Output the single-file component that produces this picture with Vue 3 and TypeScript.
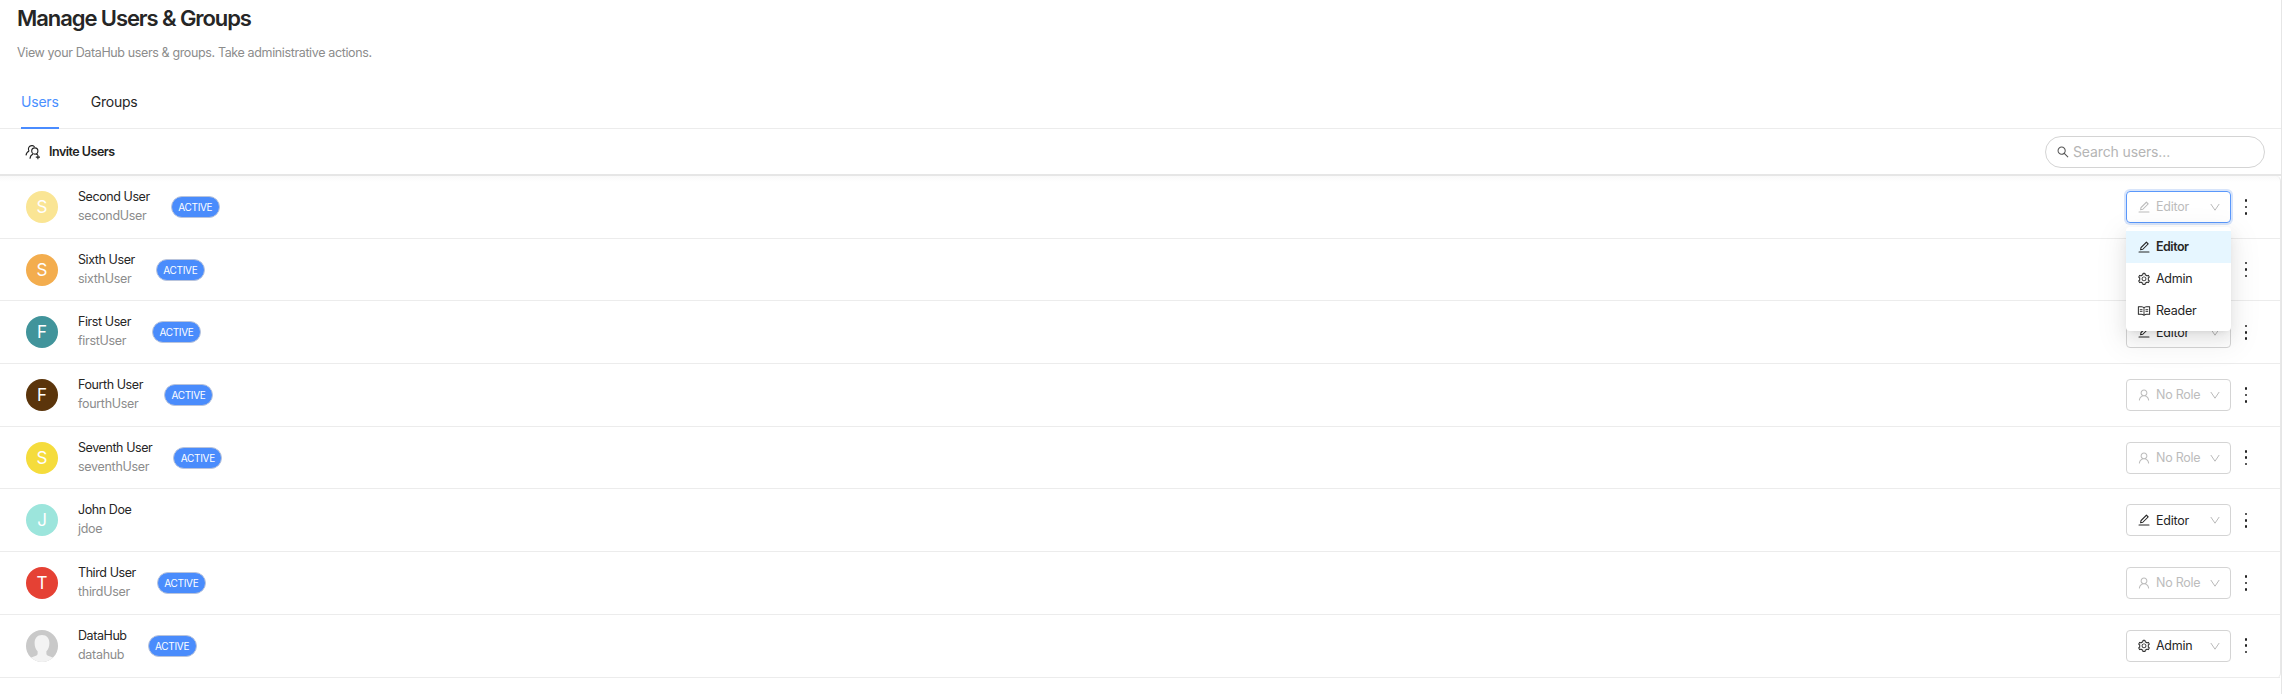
<script setup lang="ts">
type IconName = 'edit' | 'setting' | 'read' | 'user'

interface Role {
  label: string
  icon: IconName
}

interface User {
  name: string
  id: string
  tone: string
  initial?: string
  active: boolean
  role?: Role
  state?: 'muted' | 'open'
}

const editor: Role = { label: 'Editor', icon: 'edit' }
const admin: Role = { label: 'Admin', icon: 'setting' }
const reader: Role = { label: 'Reader', icon: 'read' }
const noRole: Role = { label: 'No Role', icon: 'user' }

const options: Role[] = [editor, admin, reader]

const users: User[] = [
  { name: 'Second User', id: 'secondUser', tone: 'cream', initial: 'S', active: true, role: editor, state: 'open' },
  { name: 'Sixth User', id: 'sixthUser', tone: 'orange', initial: 'S', active: true },
  { name: 'First User', id: 'firstUser', tone: 'teal', initial: 'F', active: true, role: editor },
  { name: 'Fourth User', id: 'fourthUser', tone: 'brown', initial: 'F', active: true, role: noRole, state: 'muted' },
  { name: 'Seventh User', id: 'seventhUser', tone: 'yellow', initial: 'S', active: true, role: noRole, state: 'muted' },
  { name: 'John Doe', id: 'jdoe', tone: 'mint', initial: 'J', active: false, role: editor },
  { name: 'Third User', id: 'thirdUser', tone: 'red', initial: 'T', active: true, role: noRole, state: 'muted' },
  { name: 'DataHub', id: 'datahub', tone: 'photo', active: true, role: admin },
]

const icons: Record<IconName, string> = {
  edit: 'M257.7 752c2 0 4-.2 6-.5L431.900 722c2-.4 3.900-1.300 5.300-2.800l423.900-423.900a9.960 9.960 0 0 0 0-14.100L694.900 114.900c-1.900-1.900-4.400-2.900-7.100-2.900s-5.200 1-7.100 2.900L256.800 538.800c-1.500 1.500-2.400 3.300-2.800 5.300l-29.500 168.200a33.500 33.500 0 0 0 9.400 29.800c6.600 6.400 14.900 9.900 23.800 9.900zm67.400-174.400L687.800 215l73.300 73.300-362.700 362.600-88.900 15.700 15.600-89zM880 836H144c-17.700 0-32 14.300-32 32v36c0 4.400 3.600 8 8 8h784c4.400 0 8-3.600 8-8v-36c0-17.700-14.300-32-32-32z',
  setting: 'M924.8 625.700l-65.500-56c3.100-19 4.700-38.400 4.700-57.800s-1.600-38.800-4.700-57.800l65.500-56a32.030 32.030 0 0 0 9.300-35.200l-.9-2.600a443.740 443.740 0 0 0-79.700-137.900l-1.800-2.100a32.120 32.120 0 0 0-35.100-9.500l-81.300 28.900c-30-24.600-63.500-44-99.700-57.600l-15.700-85a32.050 32.050 0 0 0-25.800-25.700l-2.700-.5c-52.100-9.400-106.900-9.400-159 0l-2.700.5a32.050 32.050 0 0 0-25.800 25.700l-15.800 85.400a351.860 351.860 0 0 0-99 57.400l-81.900-29.100a32 32 0 0 0-35.100 9.500l-1.800 2.100a446.020 446.020 0 0 0-79.700 137.900l-.9 2.600c-4.500 12.500-.8 26.500 9.300 35.200l66.300 56.600c-3.100 18.800-4.600 38-4.600 57.100 0 19.200 1.500 38.400 4.600 57.100L99 625.500a32.030 32.030 0 0 0-9.300 35.200l.9 2.600c18.100 50.400 44.900 96.900 79.700 137.900l1.800 2.100a32.120 32.120 0 0 0 35.100 9.500l81.900-29.100c29.800 24.500 63.100 43.900 99 57.400l15.800 85.400a32.050 32.050 0 0 0 25.800 25.700l2.700.5a449.400 449.400 0 0 0 159 0l2.700-.5a32.050 32.050 0 0 0 25.800-25.700l15.700-85a350 350 0 0 0 99.700-57.600l81.300 28.900a32 32 0 0 0 35.100-9.500l1.800-2.100c34.800-41.100 61.600-87.500 79.700-137.900l.9-2.600c4.500-12.300.8-26.300-9.300-35zM788.300 465.900c2.500 15.100 3.800 30.600 3.800 46.100s-1.300 31-3.800 46.100l-6.600 40.100 74.700 63.900a370.030 370.030 0 0 1-42.600 73.600L721 702.800l-31.400 25.800c-23.900 19.600-50.500 35-79.300 45.800l-38.100 14.300-17.900 97a377.500 377.500 0 0 1-85 0l-17.900-97.200-37.800-14.500c-28.500-10.800-55-26.200-78.700-45.700l-31.400-25.900-93.400 33.200c-17-22.900-31.200-47.600-42.600-73.600l75.500-64.500-6.500-40c-2.400-14.900-3.700-30.300-3.700-45.500 0-15.300 1.200-30.600 3.700-45.500l6.500-40-75.500-64.500c11.300-26.100 25.600-50.700 42.600-73.600l93.400 33.200 31.400-25.900c23.700-19.500 50.200-34.900 78.700-45.700l37.900-14.300 17.900-97.200c28.100-3.200 56.800-3.200 85 0l17.900 97 38.100 14.300c28.700 10.800 55.400 26.200 79.300 45.800l31.400 25.800 92.800-32.900c17 22.900 31.200 47.600 42.600 73.600L781.800 426l6.500 39.900zM512 326c-97.200 0-176 78.800-176 176s78.800 176 176 176 176-78.800 176-176-78.800-176-176-176zm79.200 255.200A111.600 111.600 0 0 1 512 614c-29.900 0-58-11.700-79.200-32.800A111.600 111.600 0 0 1 400 502c0-29.900 11.700-58 32.800-79.200C454 401.600 482.100 390 512 390c29.900 0 58 11.600 79.200 32.800A111.600 111.600 0 0 1 624 502c0 29.900-11.700 58-32.800 79.200z',
  read: 'M928 161H699.200c-49.100 0-97.100 14.100-138.400 40.700L512 233l-48.800-31.300A255.200 255.200 0 0 0 324.800 161H96c-17.700 0-32 14.300-32 32v568c0 17.700 14.300 32 32 32h228.800c49.100 0 97.100 14.100 138.400 40.700l44.400 28.600c1.300.8 2.800 1.300 4.300 1.300s3-.4 4.300-1.300l44.400-28.600C602 807.100 650.100 793 699.200 793H928c17.700 0 32-14.300 32-32V193c0-17.700-14.300-32-32-32zM324.800 721H136V233h188.800c35.400 0 69.800 10.100 99.500 29.200l48.800 31.300 6.900 4.500v462c-47.600-25.600-100.800-39-155.200-39zm563.200 0H699.200c-54.400 0-107.600 13.400-155.200 39V298l6.900-4.500 48.800-31.300c29.700-19.100 64.100-29.200 99.500-29.200H888v488zM396.900 361H211.100c-3.900 0-7.100 3.400-7.100 7.500v45c0 4.100 3.200 7.500 7.100 7.500h185.700c3.900 0 7.100-3.400 7.100-7.500v-45c.1-4.100-3.100-7.500-7-7.500zm223.100 7.500v45c0 4.100 3.200 7.500 7.100 7.500h185.700c3.900 0 7.100-3.400 7.100-7.500v-45c0-4.100-3.200-7.500-7.100-7.500H627.100c-3.900 0-7.100 3.400-7.100 7.500zM396.900 501H211.100c-3.900 0-7.100 3.400-7.100 7.500v45c0 4.100 3.200 7.500 7.100 7.500h185.700c3.900 0 7.100-3.400 7.100-7.500v-45c.1-4.100-3.100-7.500-7-7.500zm416 0H627.100c-3.900 0-7.100 3.400-7.100 7.500v45c0 4.100 3.200 7.500 7.100 7.500h185.700c3.900 0 7.100-3.400 7.100-7.500v-45c.1-4.100-3.100-7.500-7-7.500z',
  user: 'M858.500 763.600a374 374 0 0 0-80.600-119.500 375.630 375.630 0 0 0-119.500-80.600c-.4-.2-.8-.3-1.200-.5C719.500 518 760 444.700 760 362c0-137-111-248-248-248S264 225 264 362c0 82.700 40.500 156 102.800 201.100-.4.2-.8.3-1.200.5-44.800 18.900-85 46-119.500 80.600a375.630 375.630 0 0 0-80.600 119.500A371.700 371.700 0 0 0 136 901.800a8 8 0 0 0 8 8.200h60c4.400 0 7.900-3.500 8-7.800 2-77.200 33-149.500 87.800-204.300 56.700-56.700 132-87.900 212.200-87.900s155.500 31.200 212.200 87.900C779 752.700 810 825 812 902.200c.1 4.400 3.600 7.800 8 7.800h60a8 8 0 0 0 8-8.200c-1-47.800-10.900-94.300-29.500-138.200zM512 534c-45.900 0-89.100-17.900-121.600-50.400S340 407.900 340 362c0-45.900 17.900-89.100 50.400-121.600S466.100 190 512 190s89.100 17.900 121.600 50.400S684 316.100 684 362c0 45.900-17.900 89.100-50.400 121.600S557.900 534 512 534z',
}
</script>

<template>
  <main class="page">
    <header class="head">
      <h1>Manage Users &amp; Groups</h1>
      <p>View your DataHub users &amp; groups. Take administrative actions.</p>
    </header>

    <nav class="tabs">
      <a class="tab current">Users</a>
      <a class="tab">Groups</a>
    </nav>

    <div class="toolbar">
      <button class="invite" type="button">
        <svg viewBox="0 0 16 16" class="invite-icon">
          <path d="M4.100 7.100A3.300 3.300 0 1 1 9.600 3M4.200 7C2.300 7.900 1.200 9.400 1 11.400M5 14.800c.1-2.200 1.100-3.900 3-4.800M11.200 10.100c.7.200 1.200.4 1.600.8" />
          <circle cx="9.800" cy="7" r="3.100" />
          <path d="M12.900 11v4.200M10.800 13.100h4.200" />
        </svg>
        <span>Invite Users</span>
      </button>
      <div class="search">
        <svg viewBox="0 0 1024 1024" class="search-icon"><path d="M909.600 854.500L649.900 594.800C690.200 542.700 712 479 712 412c0-80.200-31.300-155.400-87.900-212.100-56.600-56.700-132-87.900-212.100-87.900s-155.500 31.300-212.100 87.900C143.200 256.500 112 331.800 112 412c0 80.100 31.300 155.500 87.900 212.100C256.500 680.800 331.800 712 412 712c67 0 130.600-21.800 182.700-62l259.700 259.600a8.200 8.200 0 0 0 11.600 0l43.600-43.500a8.200 8.200 0 0 0 0-11.600zM570.400 570.400C528 612.700 471.800 636 412 636s-116-23.300-158.400-65.600C211.300 528 188 471.800 188 412s23.300-116.100 65.600-158.400C296 211.300 352.200 188 412 188s116.100 23.200 158.400 65.600S636 352.200 636 412s-23.300 116.100-65.600 158.400z" /></svg>
        <span>Search users...</span>
      </div>
    </div>

    <ul class="list">
      <li v-for="user in users" :key="user.id" class="row">
        <div class="avatar" :class="user.tone">
          <span v-if="user.initial">{{ user.initial }}</span>
          <svg v-else viewBox="0 0 32 32">
            <path d="M16 5c4.700 0 7.400 3.300 7.400 7.900 0 3.600-1.100 6.500-3 8.400v2.400c0 1.300 1 1.800 3 2.500 2.800 1 5.300 1.600 6.600 3.800v2H2v-2c1.300-2.200 3.800-2.800 6.600-3.800 2-.7 3-1.200 3-2.500v-2.400c-1.900-1.900-3-4.800-3-8.400C8.600 8.300 11.300 5 16 5z" />
          </svg>
        </div>
        <div class="who">
          <span class="name">{{ user.name }}</span>
          <span class="id">{{ user.id }}</span>
        </div>
        <span v-if="user.active" class="badge">ACTIVE</span>

        <div class="actions">
          <div class="select" :class="user.state">
            <template v-if="user.role">
              <svg viewBox="0 0 1024 1024" class="icon"><path :d="icons[user.role.icon]" /></svg>
              <span class="label">{{ user.role.label }}</span>
            </template>
            <svg viewBox="0 0 12 12" class="chevron"><path d="M1.800 3L6 9.200 10.200 3" /></svg>
            <div v-if="user.state === 'open'" class="menu">
              <div v-for="(option, i) in options" :key="option.label" class="option" :class="{ chosen: i === 0 }">
                <svg viewBox="0 0 1024 1024" class="icon"><path :d="icons[option.icon]" /></svg>
                <span class="label">{{ option.label }}</span>
              </div>
            </div>
          </div>
          <div class="more"><i /><i /><i /></div>
        </div>
      </li>
    </ul>
  </main>
</template>

<style>
body {
  background: #fff;
}
</style>

<style scoped>
* {
  box-sizing: border-box;
}

.page {
  width: 2282px;
  height: 694px;
  overflow: hidden;
  display: flex;
  flex-direction: column;
  border-right: 1px solid #e6e6e6;
  background: #fff;
  color: #262626;
  font-family: Inter, 'Liberation Sans', sans-serif;
  font-size: 12.5px;
}

.head {
  height: 76px;
  padding: 3px 17px 0;
}

h1 {
  margin: 0;
  font-size: 22px;
  line-height: 30px;
  font-weight: 600;
  letter-spacing: -1.08px;
}

p {
  margin: 10px 0 0;
  line-height: 19px;
  letter-spacing: -0.37px;
  color: #8c8c8c;
}

.tabs {
  height: 53px;
  flex: none;
  display: flex;
  gap: 32px;
  padding-left: 21px;
  border-bottom: 1px solid #ececec;
}

.tab {
  height: 53px;
  padding-top: 16px;
  font-size: 14px;
  line-height: 20px;
  letter-spacing: -0.2px;
}

.current {
  color: #4a90ff;
  border-bottom: 2px solid #4a8cff;
}

.toolbar {
  height: 47px;
  flex: none;
  display: flex;
  align-items: center;
  justify-content: space-between;
  padding: 0 16px 0 25px;
  border-bottom: 2px solid #e6e6e6;
}

.invite {
  display: flex;
  align-items: center;
  gap: 8px;
  padding: 0;
  border: 0;
  background: none;
  color: #222;
  font: 600 12.5px/18px Inter, 'Liberation Sans', sans-serif;
  letter-spacing: -0.5px;
}

.invite-icon {
  width: 16px;
  height: 16px;
  fill: none;
  stroke: #222;
  stroke-width: 1.1;
}

.search {
  width: 220px;
  height: 32px;
  display: flex;
  align-items: center;
  gap: 3px;
  padding-left: 10px;
  border: 1px solid #d4d4d4;
  border-radius: 16px;
  color: #b5b5b5;
  font-size: 14px;
  letter-spacing: -0.13px;
}

.search-icon {
  width: 14px;
  height: 14px;
  fill: #555;
}

.list {
  height: 502px;
  flex: none;
  margin: 0;
  padding: 0;
  list-style: none;
  border-right: 1px solid #e8e8e8;
  border-radius: 0 5px 5px 0;
  background: linear-gradient(#f9f9f9, #fff 6px);
}

.row {
  height: 62.7px;
  display: flex;
  align-items: center;
  padding: 0 32px 0 26px;
  border-bottom: 1px solid #ececec;
}

.avatar {
  width: 32px;
  height: 32px;
  flex: none;
  display: flex;
  align-items: center;
  justify-content: center;
  overflow: hidden;
  border-radius: 50%;
  color: #fff;
  font-size: 17px;
}

.avatar svg {
  width: 32px;
  height: 32px;
  fill: #f3f3f3;
}

.cream { background: #fae594; }
.orange { background: #f3ad4e; }
.teal { background: #41949b; }
.brown { background: #5b350b; }
.yellow { background: #f5dc3c; }
.mint { background: #9ce5dc; }
.red { background: #e54134; }
.photo { background: #c9c9c9; }

.who {
  display: flex;
  flex-direction: column;
  margin: 0 0 2px 20px;
  line-height: 19px;
  letter-spacing: -0.42px;
  white-space: nowrap;
}

.id {
  letter-spacing: -0.3px;
  color: #8c8c8c;
}

.badge {
  width: 49px;
  height: 22px;
  margin-left: 21px;
  border: 1px solid #b9c4dc;
  border-radius: 11px;
  background: #4a8cfc;
  color: #fff;
  font-size: 10px;
  line-height: 20px;
  letter-spacing: -0.3px;
  text-align: center;
}

.actions {
  display: flex;
  align-items: center;
  margin-left: auto;
}

.select {
  position: relative;
  width: 105px;
  height: 32px;
  display: flex;
  align-items: center;
  padding: 0 9px 0 10px;
  border: 1px solid #d4d4d4;
  border-radius: 4px;
  letter-spacing: -0.25px;
  fill: #262626;
}

.muted,
.open {
  color: #bcbcbc;
  fill: #bcbcbc;
}

.open {
  border-color: #5a98fb;
  box-shadow: 0 0 0 2px #d8e5fb;
}

.icon {
  width: 14px;
  height: 14px;
  flex: none;
  margin-right: 5px;
}

.chevron {
  width: 12px;
  height: 12px;
  margin-left: auto;
  fill: none;
  stroke: #bbb;
}

.menu {
  position: absolute;
  z-index: 2;
  top: 35px;
  left: -1px;
  width: 105px;
  height: 104px;
  padding: 4px 0;
  border-radius: 4px;
  background: #fff;
  color: #262626;
  fill: #262626;
  box-shadow: 0 3px 6px -4px rgba(0, 0, 0, 0.12), 0 6px 16px rgba(0, 0, 0, 0.08), 0 9px 28px 8px rgba(0, 0, 0, 0.05);
}

.option {
  height: 32px;
  display: flex;
  align-items: center;
  padding-left: 11px;
}

.chosen {
  background: #e6f6ff;
  font-weight: 600;
  letter-spacing: -0.5px;
}

.more {
  display: flex;
  flex-direction: column;
  align-items: center;
  gap: 3.800px;
  width: 4px;
  margin-left: 13px;
}

.more i {
  width: 2.600px;
  height: 2.600px;
  border-radius: 50%;
  background: #222;
}
</style>
